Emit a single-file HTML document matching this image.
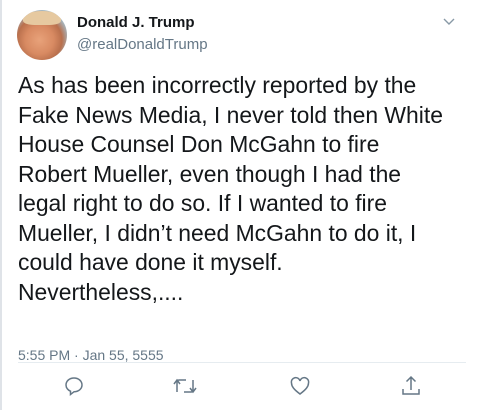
<!DOCTYPE html>
<html><head><meta charset="utf-8"><style>
*{margin:0;padding:0;box-sizing:border-box}
body{width:480px;height:410px;background:#fff;font-family:"Liberation Sans",Arial,sans-serif;position:relative;overflow:hidden;border-left:2px solid #dfe3e8}
.av{position:absolute;left:15px;top:10px;width:50px;height:50px;border-radius:50%;background:radial-gradient(circle at 45% 60%,#e8a27a 0,#d88a62 35%,#b9704d 55%,#9fd3ee 80%);overflow:hidden}
.av:before{content:"";position:absolute;left:6px;top:1px;width:38px;height:14px;background:#e6c9a0;border-radius:50% 50% 30% 30%}
.name{position:absolute;left:75px;top:14px;font-weight:bold;font-size:15px;color:#14171a}
.handle{position:absolute;left:75px;top:36px;font-size:15px;color:#657786}
.chev{position:absolute;left:440px;top:16px}
.txt{position:absolute;left:16px;top:71px;font-size:22.9px;line-height:29.5px;color:#14171a;white-space:pre}
.time{position:absolute;left:16px;top:347px;font-size:14px;color:#657786}
.sep{position:absolute;left:16px;right:14px;top:362px;height:1px;background:#e6ecf0}
svg.i{position:absolute;top:375px}
</style></head><body>
<div class="av"></div>
<div class="name">Donald J. Trump</div>
<div class="handle">@realDonaldTrump</div>
<svg class="chev" width="14" height="10" viewBox="0 0 14 10"><path d="M2 3l5 5 5-5" fill="none" stroke="#8899a6" stroke-width="1.4"/></svg>
<div class="txt">As has been incorrectly reported by the
Fake News Media, I never told then White
House Counsel Don McGahn to fire
Robert Mueller, even though I had the
legal right to do so. If I wanted to fire
Mueller, I didn’t need McGahn to do it, I
could have done it myself.
Nevertheless,....</div>
<div class="time">5:55 PM · Jan 55, 5555</div>
<div class="sep"></div>
<svg class="i" style="left:61px" width="22" height="22" viewBox="0 0 22 22"><path d="M11 3c-4.5 0-8 3-8 7 0 3 2.2 5.3 4.5 6.2v3.3l3.6-2.8c4.4 0 7.9-2.9 7.9-6.7 0-4-3.5-7-8-7z" fill="none" stroke="#657786" stroke-width="1.5"/></svg>
<svg class="i" style="left:170px" width="26" height="22" viewBox="0 0 26 22"><path d="M5 17V7a2 2 0 0 1 2-2h7M2 9l3-4 3 4M21 5v10a2 2 0 0 1-2 2h-7M18 13l3 4 3-4" fill="none" stroke="#657786" stroke-width="1.5"/></svg>
<svg class="i" style="left:287px" width="22" height="22" viewBox="0 0 22 22"><path d="M11 19C5 14.5 2.5 11.5 2.5 8A4.3 4.3 0 0 1 11 6a4.3 4.3 0 0 1 8.5 2c0 3.5-2.5 6.5-8.5 11z" fill="none" stroke="#657786" stroke-width="1.5"/></svg>
<svg class="i" style="left:398px" width="22" height="22" viewBox="0 0 22 22"><path d="M11 2v13M6.5 6.5L11 2l4.5 4.5M3 14v5h16v-5" fill="none" stroke="#657786" stroke-width="1.5"/></svg>
</body></html>
